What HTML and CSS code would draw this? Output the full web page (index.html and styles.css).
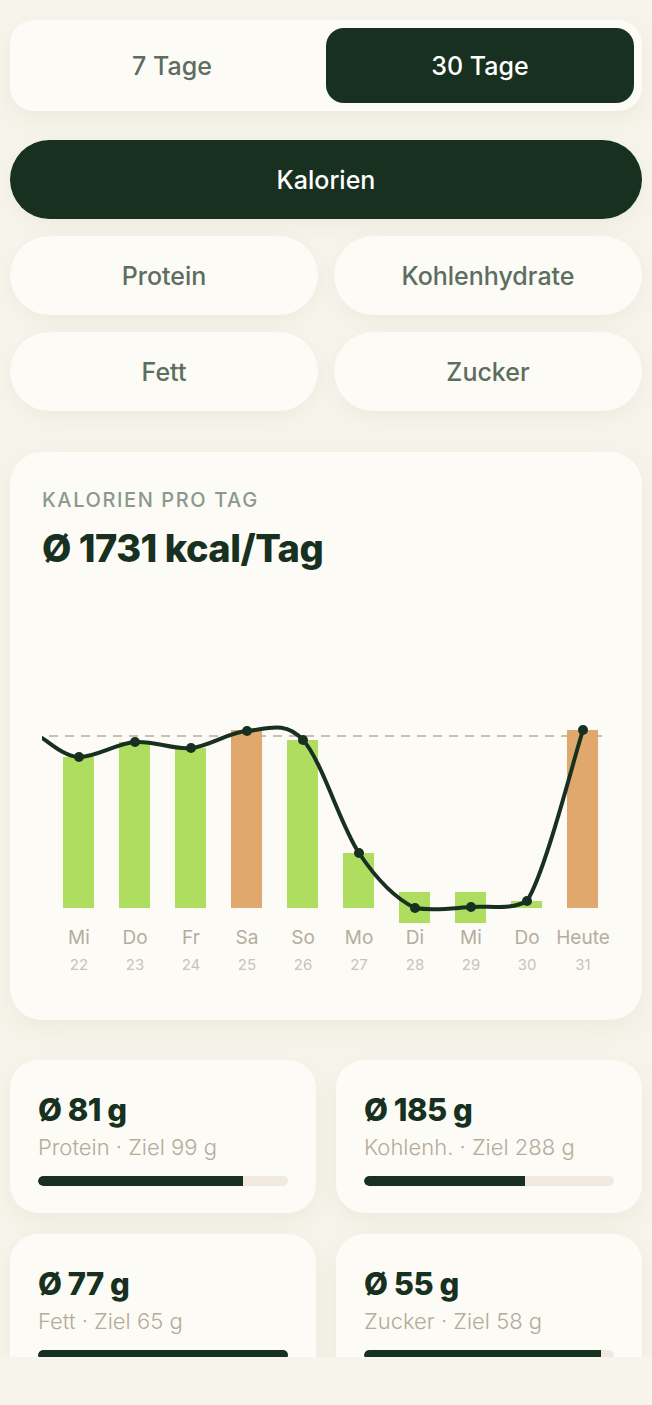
FILE: index.html
```html
<!DOCTYPE html>
<html lang="de">
<head>
<meta charset="utf-8">
<title>Statistik</title>
<link rel="stylesheet" href="styles.css">
</head>
<body>
<div class="screen">
  <div class="content">
    <div class="segment">
      <button class="seg-btn">7 Tage</button>
      <button class="seg-btn active">30 Tage</button>
    </div>

    <button class="metric metric-active">Kalorien</button>
    <div class="metric-grid">
      <button class="metric">Protein</button>
      <button class="metric">Kohlenhydrate</button>
      <button class="metric">Fett</button>
      <button class="metric">Zucker</button>
    </div>

    <section class="chart-card">
      <div class="chart-label">KALORIEN PRO TAG</div>
      <div class="chart-value">Ø 1731 kcal/Tag</div>
      <svg class="chart" width="568" height="398" viewBox="0 0 568 398">
        <line x1="7" y1="146" x2="562" y2="146" class="goal"/>
        <rect x="21" y="167" width="31" height="151" class="bar-g"/>
        <rect x="77" y="152" width="31" height="166" class="bar-g"/>
        <rect x="133" y="158" width="31" height="160" class="bar-g"/>
        <rect x="189" y="140" width="31" height="178" class="bar-o"/>
        <rect x="245" y="150" width="31" height="168" class="bar-g"/>
        <rect x="301" y="263" width="31" height="55" class="bar-g"/>
        <rect x="357" y="302" width="31" height="31" class="bar-g"/>
        <rect x="413" y="302" width="31" height="31" class="bar-g"/>
        <rect x="469" y="311" width="31" height="7" class="bar-g"/>
        <rect x="525" y="140" width="31" height="178" class="bar-o"/>
        <path class="trend" d="M0,148 C6.2,151.2 21.5,166.3 37,167 C52.5,167.7 74.3,153.5 93,152 C111.7,150.5 130.3,159.8 149,158 C167.7,156.2 186.3,142.3 205,141 C223.7,139.7 242.3,129.7 261,150 C279.7,170.3 298.3,235 317,263 C335.7,291 354.3,309 373,318 C391.7,321 410.3,318.2 429,317 C447.7,315.8 470,320 485,311 C503.7,281.5 531.7,168.5 541,140"/>
        <g class="dots">
          <circle cx="37" cy="167" r="5"/>
          <circle cx="93" cy="152" r="5"/>
          <circle cx="149" cy="158" r="5"/>
          <circle cx="205" cy="141" r="5"/>
          <circle cx="261" cy="150" r="5"/>
          <circle cx="317" cy="263" r="5"/>
          <circle cx="373" cy="318" r="5"/>
          <circle cx="429" cy="317" r="5"/>
          <circle cx="485" cy="311" r="5"/>
          <circle cx="541" cy="140" r="5"/>
        </g>
        <g class="day">
          <text x="37" y="354">Mi</text>
          <text x="93" y="354">Do</text>
          <text x="149" y="354">Fr</text>
          <text x="205" y="354">Sa</text>
          <text x="261" y="354">So</text>
          <text x="317" y="354">Mo</text>
          <text x="373" y="354">Di</text>
          <text x="429" y="354">Mi</text>
          <text x="485" y="354">Do</text>
          <text x="541" y="354">Heute</text>
        </g>
        <g class="date">
          <text x="37" y="380">22</text>
          <text x="93" y="380">23</text>
          <text x="149" y="380">24</text>
          <text x="205" y="380">25</text>
          <text x="261" y="380">26</text>
          <text x="317" y="380">27</text>
          <text x="373" y="380">28</text>
          <text x="429" y="380">29</text>
          <text x="485" y="380">30</text>
          <text x="541" y="380">31</text>
        </g>
      </svg>
    </section>

    <div class="stats">
      <div class="stat-card">
        <div class="stat-value">Ø 81 g</div>
        <div class="stat-sub">Protein · Ziel 99 g</div>
        <div class="track"><div class="fill" style="width:82%"></div></div>
      </div>
      <div class="stat-card">
        <div class="stat-value">Ø 185 g</div>
        <div class="stat-sub">Kohlenh. · Ziel 288 g</div>
        <div class="track"><div class="fill" style="width:64.4%"></div></div>
      </div>
      <div class="stat-card">
        <div class="stat-value">Ø 77 g</div>
        <div class="stat-sub">Fett · Ziel 65 g</div>
        <div class="track"><div class="fill" style="width:100%"></div></div>
      </div>
      <div class="stat-card">
        <div class="stat-value">Ø 55 g</div>
        <div class="stat-sub">Zucker · Ziel 58 g</div>
        <div class="track"><div class="fill" style="width:94.8%"></div></div>
      </div>
    </div>
  </div>
</div>
</body>
</html>
```

FILE: styles.css
```css
* { box-sizing: border-box; }

html, body {
  margin: 0;
  padding: 0;
  background: #f7f4eb;
  font-family: "Inter", "Liberation Sans", sans-serif;
}

.screen {
  height: 1357px;
  overflow: hidden;
}

.content {
  padding: 20px 10px 0;
  display: flex;
  flex-direction: column;
}

button {
  font-family: inherit;
  border: none;
  cursor: pointer;
}

.segment {
  height: 91px;
  background: #fcfbf6;
  border-radius: 24px;
  padding: 8px;
  display: grid;
  grid-template-columns: 1fr 1fr;
  gap: 0;
  box-shadow: 0 8px 24px rgba(120, 110, 80, 0.08);
}

.seg-btn {
  background: transparent;
  border-radius: 18px;
  font-size: 25px;
  font-weight: 500;
  color: #5d6d60;
}

.seg-btn.active {
  background: #173020;
  color: #ffffff;
}

.metric {
  height: 79px;
  border-radius: 40px;
  background: #fcfbf6;
  font-size: 25px;
  font-weight: 500;
  color: #5d6d60;
  box-shadow: 0 6px 20px rgba(120, 110, 80, 0.07);
}

.metric-active {
  margin-top: 29px;
  background: #173020;
  color: #ffffff;
}

.metric-grid {
  margin-top: 17px;
  display: grid;
  grid-template-columns: 1fr 1fr;
  column-gap: 16px;
  row-gap: 17px;
}

.chart-card {
  margin-top: 41px;
  background: #fcfbf6;
  border-radius: 32px;
  padding: 36px 32px 32px;
  box-shadow: 0 8px 28px rgba(120, 110, 80, 0.08);
}

.chart-label {
  font-size: 20px;
  line-height: 24px;
  letter-spacing: 1.6px;
  color: #8b998c;
  font-weight: 500;
}

.chart-value {
  margin-top: 14px;
  font-size: 38px;
  line-height: 44px;
  font-weight: 800;
  letter-spacing: -0.5px;
  color: #173020;
}

.chart {
  display: block;
  margin-top: 20px;
  overflow: hidden;
}

.goal {
  stroke: #c8c1b3;
  stroke-width: 2;
  stroke-dasharray: 9 7;
}

.bar-g { fill: #aedd60; }
.bar-o { fill: #e0a86c; }

.trend {
  fill: none;
  stroke: #173020;
  stroke-width: 4;
  stroke-linecap: round;
  stroke-linejoin: round;
}

.dots circle { fill: #173020; }

.day text {
  font-family: "Inter", "Liberation Sans", sans-serif;
  font-size: 19px;
  fill: #b5ad9f;
  text-anchor: middle;
}

.date text {
  font-family: "Inter", "Liberation Sans", sans-serif;
  font-size: 15px;
  fill: #cbc3b5;
  text-anchor: middle;
}

.stats {
  margin-top: 40px;
  display: grid;
  grid-template-columns: 1fr 1fr;
  column-gap: 20px;
  row-gap: 21px;
}

.stat-card {
  height: 153px;
  background: #fcfbf6;
  border-radius: 28px;
  padding: 32px 28px 27px;
  box-shadow: 0 8px 24px rgba(120, 110, 80, 0.08);
}

.stat-value {
  font-size: 31px;
  line-height: 36px;
  font-weight: 800;
  letter-spacing: -0.5px;
  color: #173020;
}

.stat-sub {
  margin-top: 6px;
  font-size: 22px;
  line-height: 26px;
  font-weight: 300;
  color: #b5ab98;
}

.track {
  margin-top: 16px;
  height: 10px;
  border-radius: 5px;
  background: #efe9df;
  overflow: hidden;
}

.fill {
  height: 100%;
  background: #173020;
  border-radius: 5px 0 0 5px;
}
```
